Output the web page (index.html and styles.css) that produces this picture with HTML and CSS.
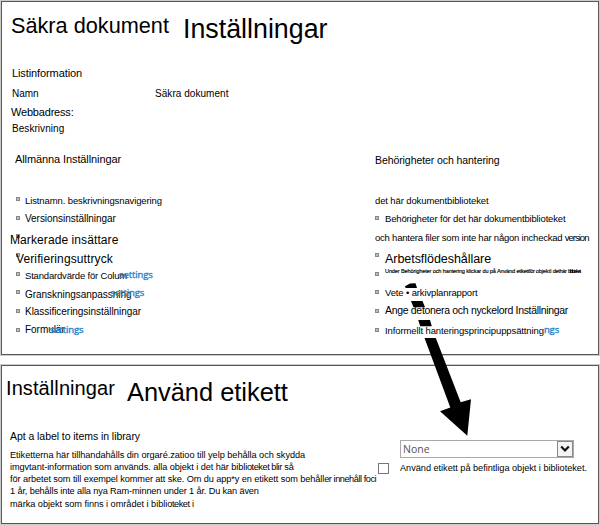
FILE: index.html
```html
<!DOCTYPE html>
<html lang="sv">
<head>
<meta charset="utf-8">
<title>Säkra dokument – Inställningar</title>
<link rel="stylesheet" href="styles.css">
</head>
<body>
<main class="page">
  <section class="panel panel-settings">
    <h1 class="title"><span class="title-site">Säkra dokument</span><span class="title-page">Inställningar</span></h1>
    <div class="info">
      <div class="s11 heading">Listinformation</div>
      <div class="s10 pair"><span class="name">Namn</span><span class="value">Säkra dokument</span></div>
      <div class="s11 address">Webbadress:</div>
      <div class="s10 desc">Beskrivning</div>
    </div>
    <div class="columns">
      <div class="col">
        <h2 class="s11 general">Allmänna Inställningar</h2>
        <div class="list">
          <div class="marks"><i></i><i></i><i></i><i></i><i></i><i></i><i></i><i></i></div>
          <div class="links links-left">
            <div class="s95 l1">Listnamn. beskrivningsnavigering</div>
            <div class="s10">Versionsinställningar</div>
            <div class="s12 l3">Markerade insättare</div>
            <div class="s12 l4">Verifieringsuttryck</div>
            <div class="s95 l5">Standardvärde för Colum<b class="ghost g1">settings</b></div>
            <div class="s10">Granskningsanpassning<b class="ghost g2">settings</b></div>
            <div class="s10">Klassificeringsinställningar</div>
            <div class="s10">Formulär<b class="ghost g3">settings</b></div>
          </div>
        </div>
      </div>
      <div class="col">
        <h2 class="s105 perms">Behörigheter och hantering</h2>
        <div class="list">
          <div class="marks"><i class="off"></i><i></i><i class="off"></i><i></i><i></i><i></i><i></i><i></i></div>
          <div class="links links-right">
            <div class="s95 r1">det här dokumentbiblioteket</div>
            <div class="s95 r2">Behörigheter för det här dokumentbiblioteket</div>
            <div class="s95 r3">och hantera filer som inte har någon incheckad <span class="squeeze">version</span></div>
            <div class="s125">Arbetsflödeshållare</div>
            <div class="tiny">Under Behörigheter och hantering klickar du på Använd <span class="tight">etikettför</span> objektI <span class="tight">dethär</span> <span class="tighter">biblioteket</span></div>
            <div class="s95 r6">Vete • arkivplanrapport</div>
            <div class="s105 r7">Ange detonera och nyckelord Inställningar</div>
            <div class="s95 r8">Informellt hanteringsprincipuppsättning<b class="ghost g4">ngs</b></div>
          </div>
        </div>
      </div>
    </div>
  </section>

  <section class="panel panel-label">
    <h1 class="title2"><span class="title2-site">Inställningar</span><span class="title2-page">Använd etikett</span></h1>
    <div class="label-body">
      <div class="copy">
        <div class="s105 apt">Apt a label to items in library</div>
        <div class="para">
          <div class="p1">Etiketterna här tillhandahålls din orgaré.zatioo till yelp behålla och skydda</div>
          <div class="p2">imgvtant-information som används. alla objekt i det här bibl<span class="close">ioteket blir</span> så</div>
          <div class="p3">för arbetet som till exempel kommer att ske. Om du app*y en etikett som behåll<span class="close">er innehåll foci</span></div>
          <div class="p4">1 år, behålls inte alla nya Ram-minnen under 1 år. Du kan även</div>
          <div class="p5">märka objekt som finns i området i bibli<span class="close">oteket</span> i</div>
        </div>
      </div>
      <div class="form">
        <div class="select"><span class="select-value">None</span><span class="select-button"><svg width="10" height="8" viewBox="0 0 10 8"><path d="M1.2 1.5 5 5.4 8.8 1.5" fill="none" stroke="#111" stroke-width="2.2"/></svg></span></div>
        <div class="check-row"><span class="checkbox"></span><span class="check-label">Använd etikett på befintliga objekt i biblioteket.</span></div>
      </div>
    </div>
  </section>

  <svg class="arrow" width="600" height="525" viewBox="0 0 600 525">
    <path d="M405 286.3 410 283.4 415.5 283.2 417 288H405.6ZM411 301H422.5L425 307.2H413.5ZM418.2 320H430L431.8 326.2H420.2ZM424.5 338H435.8L460.7 402.3 471 399.2 467.3 435.8 440 411.3 450.3 407.5Z"/>
  </svg>
</main>
</body>
</html>
```
FILE: styles.css
```css
* { box-sizing: border-box; }
body { margin: 0; background: #fff; color: #000; font-family: "Liberation Sans", Arial, sans-serif; }
h1, h2 { margin: 0; font-weight: 400; }
.page { position: relative; width: 600px; height: 525px; padding: 1px; overflow: hidden; }
.panel { width: 598px; border: 1px solid #585858; box-shadow: 0 0 0 1px #ccc; white-space: nowrap; }
.panel-settings { height: 354px; }
.panel-label { height: 159px; margin-top: 10px; }

.s95 { font-size: 9.5px; }
.s10 { font-size: 10px; }
.s105 { font-size: 10.5px; }
.s11 { font-size: 11px; }
.s12 { font-size: 12px; }
.s125 { font-size: 12.5px; }

.title { display: flex; height: 64px; padding-left: 9px; line-height: 30px; }
.title-site { width: 172px; padding-top: 9px; font-size: 21.7px; }
.title-page { padding-top: 12px; font-size: 26.8px; }

.info { height: 84px; padding-left: 10px; line-height: 14px; display: grid; grid-template-rows: 21px 18px 17px 14px; align-content: start; }
.heading { letter-spacing: -.1px; }
.pair { display: flex; }
.name { width: 143px; }
.value { letter-spacing: .05px; }
.address { margin-left: -1px; letter-spacing: -.19px; }
.desc { letter-spacing: .05px; }

.columns { display: grid; grid-template-columns: 359px 1fr; padding-left: 13px; line-height: 14px; }
.columns h2 { height: 42px; padding-top: 2px; }
.general { letter-spacing: -.1px; }
.columns .perms { letter-spacing: -.08px; padding: 3px 0 0 1px; }
.list { display: grid; grid-template-columns: 10px 1fr; }
.marks { display: flex; flex-direction: column; gap: 14.7px; padding: 5px 0 0 1px; }
.marks i { width: 4px; height: 4px; border: 1px solid #888; background: #bbb; }
.marks .off { visibility: hidden; }
.links { display: grid; align-content: start; padding-top: 2px; }
.links-left { grid-template-rows: 18px 21px 19px 17px 19px 17px 18px 14px; letter-spacing: -.04px; }
.links-right { grid-template-rows: 18px 19px 21px 12px 22px 17px 21px 14px; padding-left: 1px; }
.links-right .s125 { letter-spacing: -.05px; }
.l1 { letter-spacing: -.11px; }
.l3 { margin-left: -15px; letter-spacing: .09px; }
.l4 { margin-left: -9px; letter-spacing: .12px; }
.l5 { letter-spacing: -.18px; }
.r1 { margin-left: -10px; letter-spacing: -.12px; }
.r2 { letter-spacing: -.16px; }
.r3 { margin-left: -10px; letter-spacing: -.22px; }
.squeeze { letter-spacing: -1px; }
.r6 { letter-spacing: -.14px; }
.r7 { letter-spacing: -.32px; }
.r8 { letter-spacing: -.11px; }
.tiny { font-size: 5.6px; letter-spacing: -.14px; -webkit-text-stroke: .15px #000; }
.tight { letter-spacing: -.35px; }
.tighter { letter-spacing: -1.2px; }
.ghost { font: 400 9.5px/14px "Open Sans", "Noto Sans", sans-serif; color: #1b7cc4; letter-spacing: -.1px; -webkit-text-stroke: .35px #2a88cc; display: inline-block; height: 14px; vertical-align: top; }
.g1 { margin: -1px 0 0 -8px; }
.g2 { margin: -2px 0 0 -21px; }
.g3 { margin: 0 0 0 -15px; }
.g4 { margin: -1px 0 0 0; }

.title2 { display: flex; height: 63px; padding-left: 4px; line-height: 30px; }
.title2-site { width: 121px; padding-top: 7px; font-size: 20px; letter-spacing: .09px; }
.title2-page { padding-top: 11px; font-size: 25.4px; }
.label-body { display: grid; grid-template-columns: 376px 1fr; }
.copy { padding-left: 8px; }
.apt { line-height: 14px; height: 20px; letter-spacing: -.06px; }
.para { font-size: 9.2px; line-height: 12px; }
.p1 { letter-spacing: -.04px; }
.p2 { letter-spacing: -.07px; }
.p3 { letter-spacing: -.09px; }
.p4 { letter-spacing: -.13px; }
.p5 { letter-spacing: -.04px; margin-top: 1px; }
.close { letter-spacing: -.45px; }
.form { padding-top: 11px; }
.select { display: flex; justify-content: space-between; width: 174px; height: 18px; margin-left: 22px; border: 1px solid #aaa; }
.select-value { padding-left: 2px; font: 10.5px/16px "Open Sans", "Noto Sans", sans-serif; color: #555; }
.select-button { width: 16px; border: 1px solid #888; background: #f4f4f4; display: flex; align-items: center; justify-content: center; }
.check-row { display: flex; align-items: center; height: 14px; margin-top: 3px; }
.checkbox { width: 11px; height: 11px; border: 1px solid #777; }
.check-label { margin-left: 11px; font-size: 9.2px; line-height: 14px; letter-spacing: -.03px; }

.arrow { position: absolute; left: 0; top: 0; }
```
